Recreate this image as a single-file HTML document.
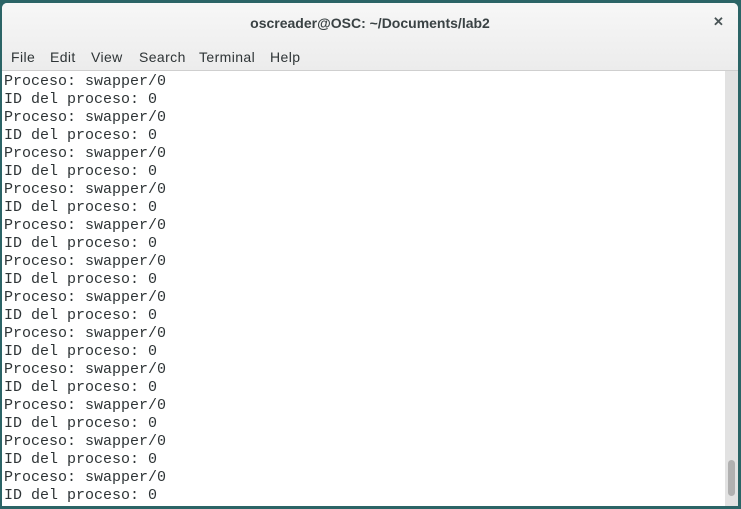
<!DOCTYPE html>
<html><head><style>
body{margin:0;width:741px;height:509px;background:#2b6466;overflow:hidden;position:relative;font-family:"Liberation Sans",sans-serif}
.win{position:absolute;left:2px;top:3px;width:736px;height:503px;background:#fff;border-radius:5px 5px 0 0;overflow:hidden}
.hdr{position:absolute;left:0;top:0;width:736px;height:67px;background:linear-gradient(#f7f7f7,#ececec);border-bottom:1px solid #cfcfcf}
.title{position:absolute;left:0;width:736px;top:12px;text-align:center;font-size:14px;font-weight:bold;color:#3a4244}
.x{position:absolute;left:711px;top:11px;font-size:13px;font-weight:bold;color:#4a5557}
.menu span{position:absolute;top:46px;font-size:14px;color:#2e3436;letter-spacing:0.4px}
.term{position:absolute;left:2px;top:70px;font-family:"Liberation Mono",monospace;font-size:15px;line-height:18px;color:#2e3436;white-space:pre}
.sb{position:absolute;left:723px;top:68px;width:13px;height:435px;background:#e2e2e2}
.th{position:absolute;left:3px;top:389px;width:7px;height:36px;border-radius:4px;background:#b0b0b0}
</style></head><body>
<div class="win">
<div class="hdr"><div class="title">oscreader@OSC: ~/Documents/lab2</div><div class="x">✕</div>
<div class="menu"><span style="left:9px">File</span><span style="left:48px">Edit</span><span style="left:89px">View</span><span style="left:137px">Search</span><span style="left:197px">Terminal</span><span style="left:268px">Help</span></div></div>
<div class="term">Proceso: swapper/0
ID del proceso: 0
Proceso: swapper/0
ID del proceso: 0
Proceso: swapper/0
ID del proceso: 0
Proceso: swapper/0
ID del proceso: 0
Proceso: swapper/0
ID del proceso: 0
Proceso: swapper/0
ID del proceso: 0
Proceso: swapper/0
ID del proceso: 0
Proceso: swapper/0
ID del proceso: 0
Proceso: swapper/0
ID del proceso: 0
Proceso: swapper/0
ID del proceso: 0
Proceso: swapper/0
ID del proceso: 0
Proceso: swapper/0
ID del proceso: 0</div>
<div class="sb"><div class="th"></div></div>
</div>
</body></html>
